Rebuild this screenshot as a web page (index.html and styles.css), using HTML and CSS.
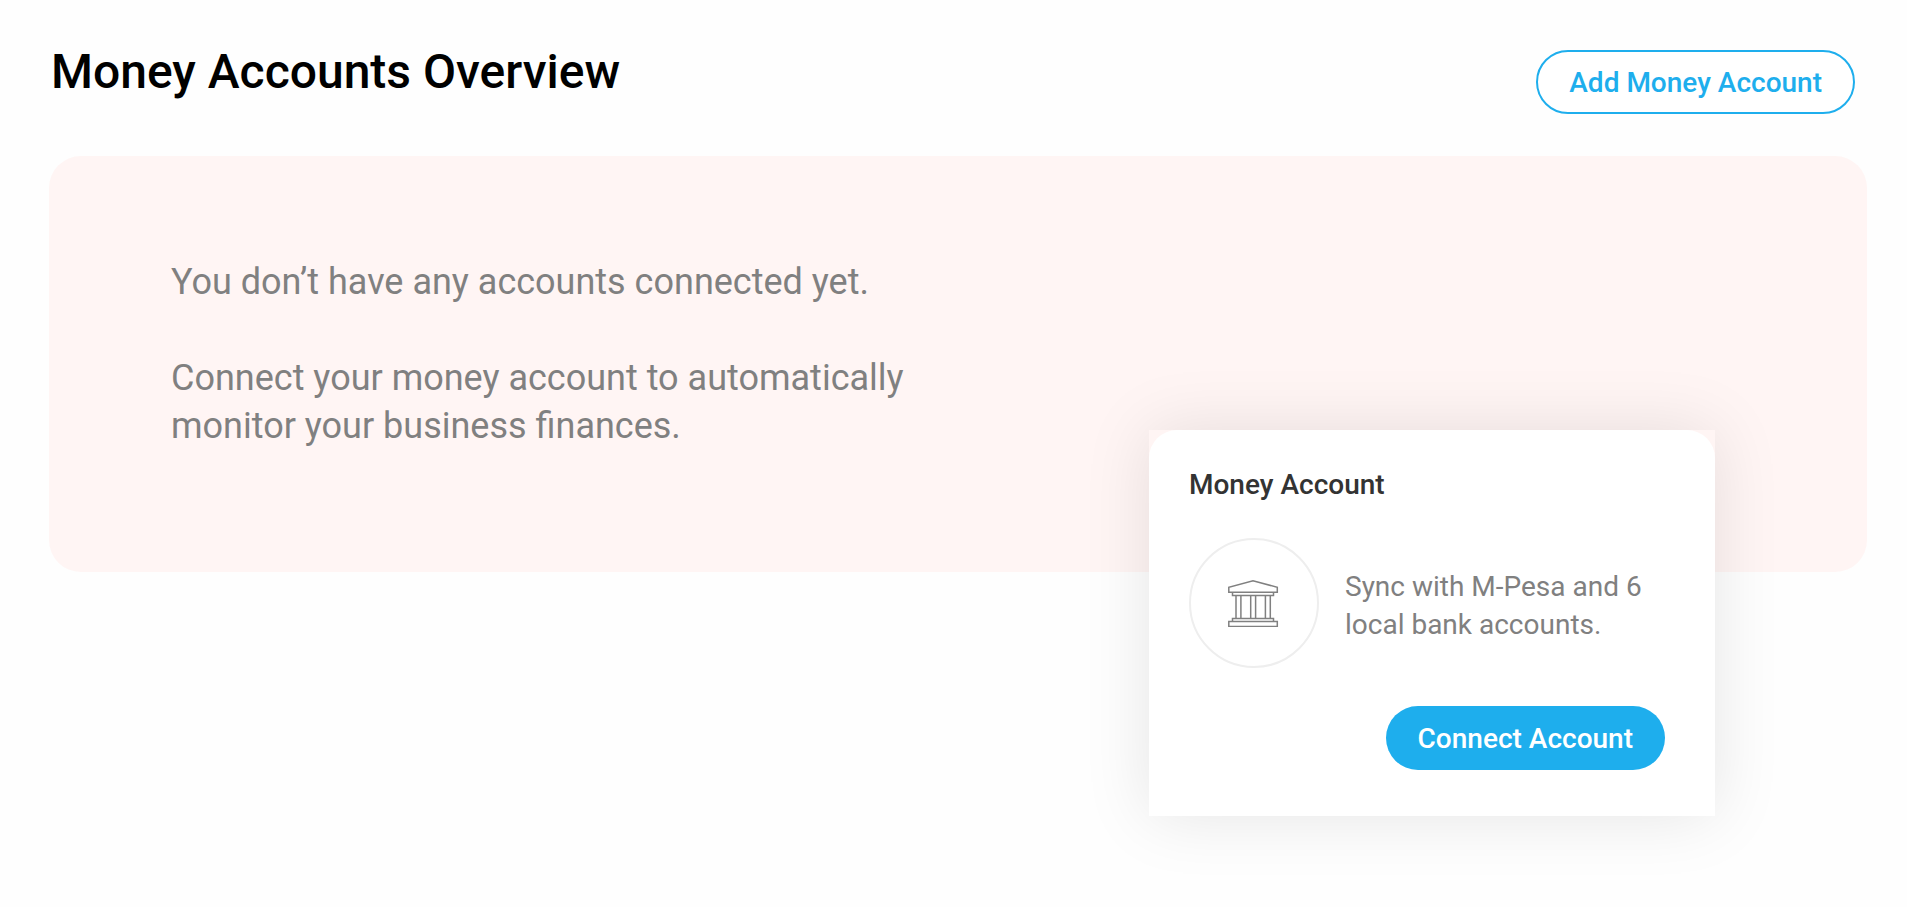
FILE: index.html
```html
<!DOCTYPE html>
<html lang="en">
<head>
  <meta charset="utf-8">
  <meta name="viewport" content="width=device-width, initial-scale=1">
  <title>Money Accounts Overview</title>
  <link rel="stylesheet" href="styles.css">
</head>
<body>
  <main class="page">
    <header class="page-header">
      <h1 class="page-title">Money Accounts Overview</h1>
      <button type="button" class="button button-outline">Add Money Account</button>
    </header>

    <section class="banner">
      <div class="banner-text">
        <p>You don’t have any accounts connected yet.</p>
        <p>Connect your money account to automatically monitor your business finances.</p>
      </div>
    </section>

    <div class="card-shadow">
      <section class="card">
        <h2 class="card-title">Money Account</h2>
        <div class="card-body">
          <div class="card-icon">
            <svg width="52" height="48" viewBox="0 -1 52 48" fill="none" stroke="#808080" stroke-width="1.5" aria-hidden="true">
              <path d="M.8 12.300V7.300L25 .8 49.300 7.300v5z"/>
              <path d="M4.500 12.300v3.200h41v-3.200"/>
              <path d="M8 15.500v23M12.900 15.500v23M22.700 15.500v23M27.600 15.500v23M37.400 15.500v23M42.300 15.500v23"/>
              <path d="M4.500 41.400v-2.900h41v2.900"/>
              <path d="M.8 41.400h48.500v5H.8z"/>
            </svg>
          </div>
          <p class="card-text">Sync with M-Pesa and 6 local bank accounts.</p>
        </div>
        <button type="button" class="button button-solid">Connect Account</button>
      </section>
    </div>
  </main>
</body>
</html>
```
FILE: styles.css
```css
* {
  box-sizing: border-box;
}

body {
  margin: 0;
  background: #fefefe;
  color: #000;
  font-family: Roboto, "Liberation Sans", sans-serif;
}

h1,
h2,
p {
  margin: 0;
}

.page {
  padding: 44px 40px 88px 49px;
}

.page-header {
  display: flex;
  justify-content: space-between;
  align-items: flex-start;
  gap: 24px;
  padding: 0 12px 42px 2px;
}

.page-title {
  font-size: 48px;
  line-height: 56px;
  font-weight: 500;
}

.button {
  height: 64px;
  padding: 0 32px;
  border: 0;
  border-radius: 32px;
  font-family: inherit;
  font-size: 28px;
  font-weight: 500;
  white-space: nowrap;
  cursor: pointer;
}

.button-outline {
  margin-top: 6px;
  padding: 0 31px;
  border: 2px solid #1eaeed;
  background: #fff;
  color: #1eaeed;
}

.button-solid {
  background: #1eaeed;
  color: #fff;
}

.banner {
  min-height: 416px;
  padding: 102px 122px;
  border-radius: 32px;
  background: #fff5f4;
}

.banner-text {
  display: grid;
  gap: 48px;
  max-width: 760px;
  color: #808080;
  font-size: 36px;
  line-height: 48px;
}

.card-shadow {
  position: relative;
  width: 566px;
  max-width: 100%;
  margin: -142px 152px 0 auto;
  box-shadow: 0 0 64px rgba(0, 0, 0, 0.1);
}

.card {
  display: flex;
  flex-direction: column;
  padding: 39px 50px 46px 40px;
  border-radius: 28px 28px 0 0;
  background: #fff;
}

.card-title {
  color: #333;
  font-size: 28px;
  line-height: 32px;
  font-weight: 500;
}

.card-body {
  display: flex;
  align-items: center;
  gap: 26px;
  margin: 37px 0 38px;
}

.card-icon {
  display: flex;
  flex: none;
  align-items: center;
  justify-content: center;
  width: 130px;
  height: 130px;
  border: 2px solid #eee;
  border-radius: 50%;
}

.card-text {
  padding-top: 5px;
  color: #808080;
  font-size: 28px;
  line-height: 38px;
}

.card .button {
  align-self: flex-end;
}
```
